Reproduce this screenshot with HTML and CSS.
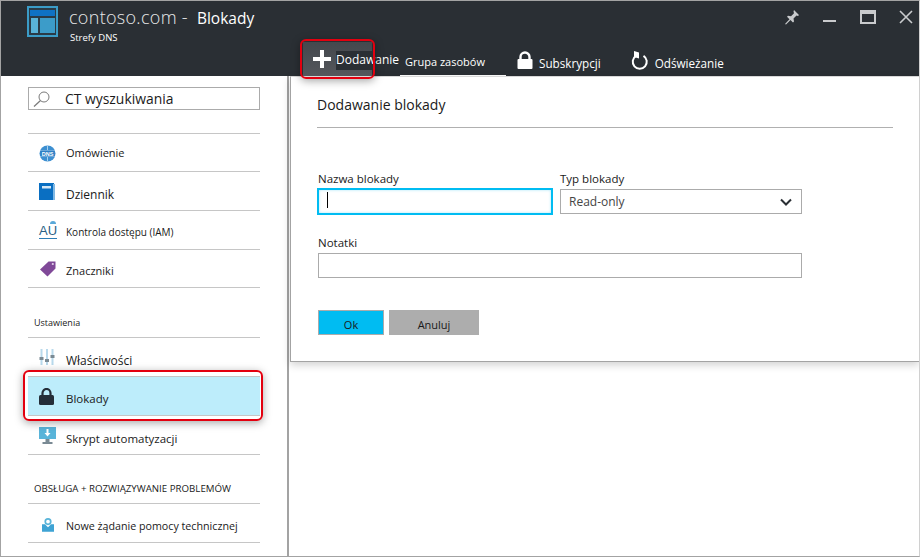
FILE: index.html
```html
<!DOCTYPE html>
<html lang="pl">
<head>
  <meta charset="UTF-8" />
  <title>contoso.com - Blokady</title>
  <link rel="stylesheet" href="styles.css">
</head>
<body>
  <div class="window">
    <!-- HEADER -->
    <header class="header">
      <div class="title-row">
        <svg class="logo" width="31" height="31" viewBox="0 0 31 31">
          <rect x="0" y="0" width="31" height="31" fill="#3b9cc7"/>
          <rect x="2" y="2" width="27" height="27" fill="#2a3b47"/>
          <rect x="3" y="4" width="25" height="6" fill="#0f72c4"/>
          <rect x="4" y="12" width="7" height="15" fill="#59b4d9"/>
          <rect x="13" y="12" width="15" height="15" fill="#3c9cc9"/>
        </svg>
        <div class="title-text">
          <div class="title-line">
            <span class="title-main">contoso.com -</span>
            <span class="title-sub">Blokady</span>
          </div>
          <div class="title-kind">Strefy DNS</div>
        </div>
        <div class="win-controls">
          <svg width="16" height="16" viewBox="0 0 16 16">
            <path d="M10 1l5 5-1 1-1.500-.5-3 3 .5 3-1 1-2.500-2.500L2 15.500 1 15l4.500-4.800L3 7.700l1-1 3 .5 3-3L9.500 2.500z" fill="#c9cbcd"/>
          </svg>
          <svg width="14" height="16" viewBox="0 0 14 16"><rect x="0" y="11" width="13" height="2" fill="#c9cbcd"/></svg>
          <svg width="16" height="16" viewBox="0 0 16 16">
            <rect x="1" y="2" width="14" height="12" fill="none" stroke="#c9cbcd" stroke-width="2"/>
            <rect x="1" y="2" width="14" height="3" fill="#c9cbcd"/>
          </svg>
          <svg width="14" height="16" viewBox="0 0 14 16"><path d="M1 2l12 12M13 2L1 14" stroke="#c9cbcd" stroke-width="1.600"/></svg>
        </div>
      </div>
      <div class="toolbar">
        <div class="tool-add">
          <svg width="18" height="18" viewBox="0 0 18 18"><path d="M7 0h4v7h7v4h-7v7H7v-7H0V7h7z" fill="#fff"/></svg>
          <span class="tool-add-label">Dodawanie</span>
        </div>
        <div class="tool-group">Grupa zasobów</div>
        <div class="tool-item tool-lock">
          <svg width="16" height="18" viewBox="0 0 16 18">
            <path d="M3.500 8V6a4.500 4.500 0 0 1 9 0v2" fill="none" stroke="#fff" stroke-width="2.400"/>
            <rect x="0.500" y="8" width="15" height="10" rx="1" fill="#fff"/>
          </svg>
          <span class="tool-text">Subskrypcji</span>
        </div>
        <div class="tool-item tool-refresh">
          <svg width="18" height="19" viewBox="0 0 18 19">
            <path d="M12.500 4.800a7 7 0 1 1-7.500 0" fill="none" stroke="#fff" stroke-width="2"/>
            <path d="M3 0l5 1.500v6L3 6z" fill="#fff"/>
          </svg>
          <span class="tool-text">Odświeżanie</span>
        </div>
      </div>
    </header>

    <div class="content">
      <!-- LEFT MENU -->
      <aside class="sidebar">
        <div class="search">
          <svg width="20" height="18" viewBox="0 0 20 18">
            <circle cx="12" cy="7" r="5" fill="none" stroke="#7a7a7a" stroke-width="1"/>
            <path d="M8.500 10.500L2 16.500" stroke="#7a7a7a" stroke-width="1.200"/>
          </svg>
          <span>CT wyszukiwania</span>
        </div>

        <nav class="nav-list">
          <div class="nav-row short">
            <svg class="nav-icon" width="17" height="17" viewBox="0 0 17 17">
              <circle cx="8.500" cy="8.500" r="8" fill="#3d8fd1"/>
              <path d="M1 5.500h15M1 11.500h15M8.500 .5v16" stroke="#a9d1ee" stroke-width="1"/>
              <rect x="1.500" y="5.500" width="14" height="6" fill="#2f7fc4"/>
              <text x="8.500" y="10.500" class="dns-text" text-anchor="middle">DNS</text>
            </svg>
            <span class="nav-label tight raised">Omówienie</span>
          </div>
          <div class="nav-row">
            <svg class="nav-icon" width="16" height="17" viewBox="0 0 16 17">
              <rect x="0" y="0" width="15" height="17" fill="#0a6fc2"/>
              <rect x="14" y="1" width="2" height="16" fill="#7fb8e4"/>
              <rect x="3" y="3" width="9" height="2.500" fill="#d5e8f6"/>
            </svg>
            <span class="nav-label roomy">Dziennik</span>
          </div>
          <div class="nav-row">
            <span class="nav-icon icon-au">AU</span>
            <span class="nav-label small">Kontrola dostępu (IAM)</span>
          </div>
          <div class="nav-row short">
            <svg class="nav-icon" width="17" height="16" viewBox="0 0 17 16">
              <path d="M9.500 0.500H16.500V7.500L8.500 15.500 1 8.500z" fill="#804998"/>
              <circle cx="13.800" cy="3" r="1.100" fill="#e6d6ed"/>
            </svg>
            <span class="nav-label tight">Znaczniki</span>
          </div>
        </nav>

        <div class="section-label settings">Ustawienia</div>
        <nav class="nav-list">
          <div class="nav-row">
            <svg class="nav-icon" width="16" height="17" viewBox="0 0 16 17">
              <path d="M2.500 0v16M8 0v16M13.500 0v16" stroke="#b8d9ec" stroke-width="2"/>
              <rect x="0.500" y="8" width="4" height="3" fill="#7a8a94"/>
              <rect x="6" y="10" width="4" height="3" fill="#7a8a94"/>
              <rect x="11.500" y="6" width="4" height="3" fill="#7a8a94"/>
            </svg>
            <span class="nav-label roomy">Właściwości</span>
          </div>
          <div class="nav-row active">
            <svg class="nav-icon" width="15" height="17" viewBox="0 0 15 17">
              <path d="M3.500 8V5a4 4 0 0 1 8 0V8" fill="none" stroke="#252e38" stroke-width="2.200"/>
              <rect x="0" y="7" width="15" height="10" rx="1.500" fill="#252e38"/>
            </svg>
            <span class="nav-label">Blokady</span>
          </div>
          <div class="nav-row">
            <svg class="nav-icon" width="17" height="17" viewBox="0 0 17 17">
              <rect x="0" y="0" width="17" height="12" fill="#59b4d9"/>
              <path d="M7.500 2h2v4h2L8.500 9.500 5.500 6h2z" fill="#fff"/>
              <rect x="6.500" y="12" width="4" height="3" fill="#7a8a94"/>
              <rect x="3.500" y="15" width="10" height="2" fill="#7a8a94"/>
            </svg>
            <span class="nav-label lowered">Skrypt automatyzacji</span>
          </div>
        </nav>

        <div class="section-label support">OBSŁUGA + ROZWIĄZYWANIE PROBLEMÓW</div>
        <nav class="nav-list">
          <div class="nav-row">
            <svg class="nav-icon icon-support" width="12" height="16" viewBox="0 0 14 16">
              <path d="M0 7h3.500L7 10.500 10.500 7H14v9H0z" fill="#3ea3d4"/>
              <circle cx="7" cy="4" r="3.200" fill="none" stroke="#59b4d9" stroke-width="2"/>
            </svg>
            <span class="nav-label long">Nowe żądanie pomocy technicznej</span>
          </div>
        </nav>
      </aside>

      <!-- BLADE -->
      <main class="blade">
        <h2 class="blade-title">Dodawanie blokady</h2>
        <form class="lock-form">
          <div class="field">
            <label class="field-label">Nazwa blokady</label>
            <div class="text-box focused"><span class="caret"></span></div>
          </div>
          <div class="field">
            <label class="field-label">Typ blokady</label>
            <div class="text-box select-box">
              <span>Read-only</span>
              <svg width="12" height="8" viewBox="0 0 12 8"><path d="M1 1.500l5 5 5-5" fill="none" stroke="#2a2f34" stroke-width="2"/></svg>
            </div>
          </div>
          <div class="field wide">
            <label class="field-label">Notatki</label>
            <div class="text-box"></div>
          </div>
          <div class="form-buttons">
            <button type="button" class="btn btn-ok">Ok</button>
            <button type="button" class="btn btn-cancel">Anuluj</button>
          </div>
        </form>
      </main>
    </div>

    <!-- RED CALLOUTS -->
    <div class="callout callout-add"></div>
    <div class="callout callout-lock"></div>
  </div>
</body>
</html>
```

FILE: styles.css
```css
html, body {
  margin: 0;
  padding: 0;
  height: 100%;
  background: #fff;
  font-family: "Open Sans", "Noto Sans", sans-serif;
  color: #1a1a1a;
}

.window {
  position: relative;
  width: 920px;
  height: 557px;
  box-sizing: border-box;
  border: 1px solid #a3a3a3;
  border-right-color: #d0d0d0;
  display: flex;
  flex-direction: column;
  overflow: hidden;
}

/* HEADER */
.header {
  height: 75px;
  flex: none;
  background: #2a2f34;
  color: #fff;
  display: flex;
  flex-direction: column;
}

.title-row {
  height: 40px;
  display: flex;
  padding-left: 26px;
}

.logo {
  margin-top: 5px;
}

.title-text {
  margin-left: 11px;
}

.title-line {
  display: flex;
  align-items: baseline;
  gap: 9px;
  margin-top: 4px;
  line-height: 25px;
}

.title-main {
  font-size: 18px;
  font-weight: 300;
  letter-spacing: 0.3px;
  color: #e8e9ea;
}

.title-sub {
  font-size: 15.500px;
}

.title-kind {
  font-size: 9.500px;
  line-height: 12px;
  margin: 1px 0 0 1px;
}

.win-controls {
  margin-left: auto;
  display: flex;
  gap: 23px;
  padding: 8px 6px 0 0;
  height: 16px;
}

.toolbar {
  display: flex;
  height: 35px;
  padding-left: 302px;
  font-size: 11px;
}

.tool-add {
  width: 69px;
  height: 34px;
  margin-top: 1px;
  background: linear-gradient(#44484d, #54575c);
  display: flex;
  align-items: center;
  padding-left: 10px;
  box-sizing: border-box;
  position: relative;
}

.tool-add-label {
  position: absolute;
  left: 33px;
  top: 9px;
  height: 19px;
  line-height: 17px;
  padding-right: 1px;
  font-size: 12px;
  background: #2a2f34;
}

.tool-group {
  width: 106px;
  margin-left: 28px;
  padding: 12px 0 0 5px;
  box-sizing: border-box;
  border-bottom: 1px solid #fff;
  line-height: 18px;
}

.tool-item {
  display: flex;
  align-items: flex-start;
  gap: 6px;
  padding-top: 10px;
}

.tool-text {
  margin-top: 4px;
  font-size: 11.700px;
  line-height: 16px;
}

.tool-lock {
  margin-left: 11px;
}

.tool-refresh {
  margin-left: 30px;
}

/* LEFT MENU */
.content {
  flex: 1;
  display: flex;
  min-height: 0;
}

.sidebar {
  width: 232px;
  flex: none;
  padding: 11px 27px 0 27px;
  border-right: 2px solid #a3a3a3;
  font-size: 11.500px;
}

.search {
  height: 23px;
  box-sizing: border-box;
  border: 1px solid #ababab;
  display: flex;
  align-items: center;
  gap: 13px;
  padding-left: 3px;
  font-size: 13.900px;
}

.nav-list {
  border-top: 1px solid #c6c6c6;
}

.search + .nav-list {
  margin-top: 23px;
}

.nav-row {
  height: 39px;
  box-sizing: border-box;
  border-bottom: 1px solid #c6c6c6;
  display: flex;
  align-items: center;
  position: relative;
}

.nav-row.short {
  height: 38px;
}

.nav-row.active {
  background: #bdedfb;
}

.nav-icon {
  position: absolute;
  left: 11px;
  top: 11px;
}

.nav-label {
  margin-left: 38px;
  padding-top: 5px;
}

.nav-label.tight {
  font-size: 11px;
  padding-top: 3px;
}

.nav-label.raised {
  padding-top: 0;
}

.nav-label.lowered {
  padding-top: 7px;
}

.nav-label.roomy {
  font-size: 12px;
  padding-top: 7px;
}

.nav-label.small {
  font-size: 10px;
  padding-top: 3px;
}

.nav-label.long {
  font-size: 10.700px;
}

.icon-au {
  font-family: "Liberation Sans", sans-serif;
  font-size: 13px;
  line-height: 14px;
  color: #2b5f85;
  border-bottom: 1px solid #2b7cb5;
  top: 13px;
}

.icon-au::before {
  content: "";
  position: absolute;
  right: 1px;
  top: -3px;
  width: 6px;
  height: 3px;
  background: #59a9d9;
  border-radius: 3px 3px 0 0;
}

.icon-support {
  left: 14px;
  top: 13px;
}

.dns-text {
  font-family: "Liberation Sans", sans-serif;
  font-size: 5.500px;
  font-weight: bold;
  fill: #fff;
}

.section-label {
  font-size: 9px;
  padding-left: 6px;
  box-sizing: border-box;
}

.section-label.settings {
  height: 49px;
  padding-top: 28px;
}

.section-label.support {
  height: 48px;
  padding-top: 27px;
  font-size: 9.700px;
  white-space: nowrap;
}

/* BLADE */
.blade {
  width: 629px;
  height: 286px;
  flex: none;
  margin-left: 1px;
  box-sizing: border-box;
  background: #fff;
  border-left: 1px solid #a3a3a3;
  border-bottom: 1px solid #a3a3a3;
  border-top: 1px solid #d8d8d8;
  box-shadow: 0 3px 8px rgba(0, 0, 0, 0.18);
  padding: 18px 26px 0 26px;
}

.blade-title {
  margin: 0;
  height: 33px;
  box-sizing: border-box;
  font-size: 14px;
  font-weight: 400;
  line-height: 19px;
  border-bottom: 1px solid #b0b0b0;
}

.lock-form {
  display: grid;
  grid-template-columns: 234px 242px;
  column-gap: 8px;
  margin: 44px 0 0 1px;
}

.field-label {
  display: block;
  font-size: 11.500px;
  line-height: 14px;
  height: 17px;
}

.field.wide {
  grid-column: 1 / 3;
  margin-top: 22px;
}

.text-box {
  height: 25px;
  box-sizing: border-box;
  border: 1px solid #ababab;
}

.text-box.focused {
  height: 27px;
  margin: -1px;
  border: 2px solid #00bcf2;
  box-shadow: inset 0 0 3px #a8e4f8;
  padding: 2px 8px;
}

.caret {
  display: block;
  width: 1px;
  height: 16px;
  background: #000;
}

.select-box {
  display: flex;
  align-items: center;
  justify-content: space-between;
  padding: 0 9px 0 8px;
  font-size: 12px;
  color: #444;
}

.form-buttons {
  grid-column: 1 / 3;
  display: flex;
  gap: 5px;
  margin-top: 32px;
}

.btn {
  height: 25px;
  padding: 3px 0 0 0;
  font-family: inherit;
  font-size: 11px;
  color: #1a1a1a;
}

.btn-ok {
  width: 66px;
  background: #00bcf2;
  border: 1px solid #ababab;
}

.btn-cancel {
  width: 90px;
  background: #adadad;
  border: none;
}

/* RED CALLOUTS */
.callout {
  position: absolute;
  box-sizing: border-box;
  border: 2px solid #e3000f;
  border-radius: 6px;
  box-shadow: 0 2px 8px rgba(0, 0, 0, 0.35);
  pointer-events: none;
}

.callout-add {
  left: 299px;
  top: 38px;
  width: 75px;
  height: 40px;
}

.callout-lock {
  left: 22px;
  top: 369px;
  width: 240px;
  height: 51px;
}
```
